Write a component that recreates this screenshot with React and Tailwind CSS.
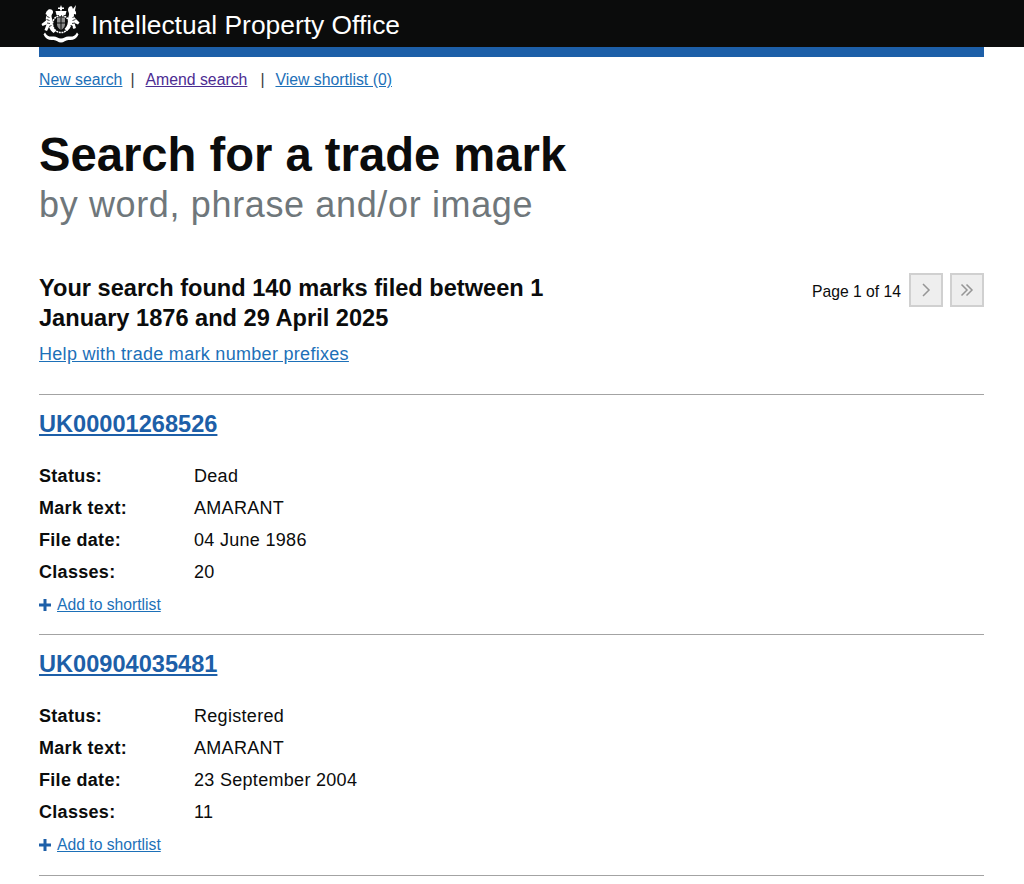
const results = [
    { id: 'UK00001268526', status: 'Dead', text: 'AMARANT', date: '04 June 1986', classes: '20' },
    { id: 'UK00904035481', status: 'Registered', text: 'AMARANT', date: '23 September 2004', classes: '11' },
];

// Royal coat of arms, rough white shapes: lion, shield, unicorn, motto scroll
function Crest() {
    return (
        <svg width="40" height="40" viewBox="0 0 40 40" className="shrink-0" fill="#fff">
            <path d="M20 1l1 2.500h2v1.500h-2v1.500h-2V5h-2V3.500h2z" />
            <path d="M14.500 7h11l-1 4h-9z" />
            <circle cx="20" cy="20" r="8.500" fill="none" stroke="#fff" strokeWidth="1.600" strokeDasharray="2 .7" />
            <path d="M16 13.500h8v7c0 2.500-2 4.500-4 5.500-2-1-4-3-4-5.500z" fill="#8c8c8c" />
            <path d="M20 13.500v12.500M16 19h8" stroke="#0b0c0c" strokeWidth="1" />
            <path d="M7.500 5.500c2.500-1 5 .5 4.500 3-.3 1.300-1.500 2-1.500 3.500 0 2 1 3 1 5 0 4 .5 7 3.500 10l-2.500 2c-2-1.500-3.500-3.500-4.500-6l-2 4-2.500-1 2-5.500-4 1.500L.5 20l4.500-3.500c-.5-2 0-4 1-5.500l-1.500-1 1-2.500z" />
            <path d="M6 12.500l2.500 1M5.500 15.500l3 1M6 19l3 .5M8 22.500l2.500-1" stroke="#0b0c0c" strokeWidth=".8" />
            <path d="M32 5l3-4-1 5.500c1 1 1.300 2.500 1 4l-2-.5c-.5 1.500.5 3 1.500 4.500l4 4-1.500 2-3.500-1.500 1.500 5-2.500 1-2-4c-1 2.500-2.500 4.500-4.500 6l-2.500-2c3-3 3.500-6 3.500-10 0-2 1-3 1-5 0-1.500-1-2.500-1-4 0-2.500 2-4.500 4-3.500z" />
            <path d="M34 12.500l-2.500 1M34.500 15.500l-3 1M34 19l-3 .5M32 22.500l-2.500-1" stroke="#0b0c0c" strokeWidth=".8" />
            <path d="M4 28.500c2 3.500 4.500 4.500 8 4 3-.5 5 2 8 2s5-2.500 8-2c3.500.5 6-.5 8-4l1.500 2c-2 4.500-5.500 6-9.500 5.500-3-.5-5 2.500-8 2.500s-5-3-8-2.500c-4 .5-7.500-1-9.500-5.500z" />
        </svg>
    );
}

function ResultRow({ label, value }) {
    return (
        <div className="flex h-8 items-center">
            <span className="w-[155px] font-bold">{label}</span>
            <span>{value}</span>
        </div>
    );
}

function Result({ item }) {
    return (
        <div className="h-[240.500px] border-t border-[#a3a3a3]">
            <a href="#" className="mt-[13px] block w-fit text-[23.600px] leading-[32px] font-bold text-[#1d5fa8] underline">{item.id}</a>
            <div className="mt-[20.400px] text-[18px] tracking-[0.300px] text-[#0b0c0c]">
                <ResultRow label="Status:" value={item.status} />
                <ResultRow label="Mark text:" value={item.text} />
                <ResultRow label="File date:" value={item.date} />
                <ResultRow label="Classes:" value={item.classes} />
            </div>
            <div className="mt-[4.600px] flex items-center text-[15.700px] leading-[24px]">
                <svg width="12" height="12" viewBox="0 0 12 12" className="mr-[6px]" fill="#1d5fa8">
                    <path d="M4.500 0h3v4.500H12v3H7.500V12h-3V7.500H0v-3h4.500z" />
                </svg>
                <a href="#" className="text-[#1d70b8] underline">Add to shortlist</a>
            </div>
        </div>
    );
}

function PageButton({ children }) {
    return (
        <button className="flex h-[34px] w-[34px] items-center justify-center border-2 border-[#d0d0d0] bg-[#eeeeee]">
            <svg width="20" height="20" viewBox="0 0 20 20" fill="none" stroke="#969696" strokeWidth="1.500">
                {children}
            </svg>
        </button>
    );
}

export default function App() {
    return (
        <div className="min-h-[884px] overflow-hidden bg-white font-['Liberation_Sans',Arial,sans-serif] text-[#0b0c0c]">
            <header className="h-[47px] bg-[#0b0c0c]">
                <div className="flex h-full items-center pl-[41px] text-white">
                    <Crest />
                    <span className="mt-[3px] ml-[10px] text-[26.400px] leading-none">Intellectual Property Office</span>
                </div>
            </header>
            <main className="mx-[39px] w-[945px]">
                <div className="h-[10px] bg-[#1d5fa8]"></div>
                <nav className="mt-[11px] flex h-6 items-center text-[15.800px]">
                    <a href="#" className="text-[#1d70b8] underline">New search</a>
                    <span className="ml-[8px] text-[#383838]">|</span>
                    <a href="#" className="ml-[11px] text-[#4c2c92] underline">Amend search</a>
                    <span className="ml-[13px] text-[#383838]">|</span>
                    <a href="#" className="ml-[11px] text-[#1d70b8] underline">View shortlist (0)</a>
                </nav>
                <h1 className="mt-[35px] mb-px text-[47.200px] leading-[56px] font-bold">Search for a trade mark</h1>
                <p className="text-[36px] leading-[42px] tracking-[0.640px] text-[#6f777b]">by word, phrase and/or image</p>
                <div className="mt-[47px] flex items-start justify-between">
                    <h2 className="w-[540px] text-[23.600px] leading-[30px] font-bold">Your search found 140 marks filed between 1 January 1876 and 29 April 2025</h2>
                    <div className="flex items-center">
                        <span className="mt-1 text-[15.700px]">Page 1 of 14</span>
                        <div className="ml-[8px]">
                            <PageButton>
                                <path d="M7 4l6 6-6 6" />
                            </PageButton>
                        </div>
                        <div className="ml-[7px]">
                            <PageButton>
                                <path d="M4.500 4.500l5.500 5.500-5.500 5.500M9.500 4.500l5.500 5.500-5.500 5.500" />
                            </PageButton>
                        </div>
                    </div>
                </div>
                <a href="#" className="mt-[9px] block w-fit text-[18px] leading-[24px] tracking-[0.300px] text-[#1d70b8] underline">Help with trade mark number prefixes</a>
                <div className="mt-[27.900px]">
                    {results.map((item) => (
                        <Result key={item.id} item={item} />
                    ))}
                    <div className="border-t border-[#a3a3a3]"></div>
                </div>
            </main>
        </div>
    );
}
